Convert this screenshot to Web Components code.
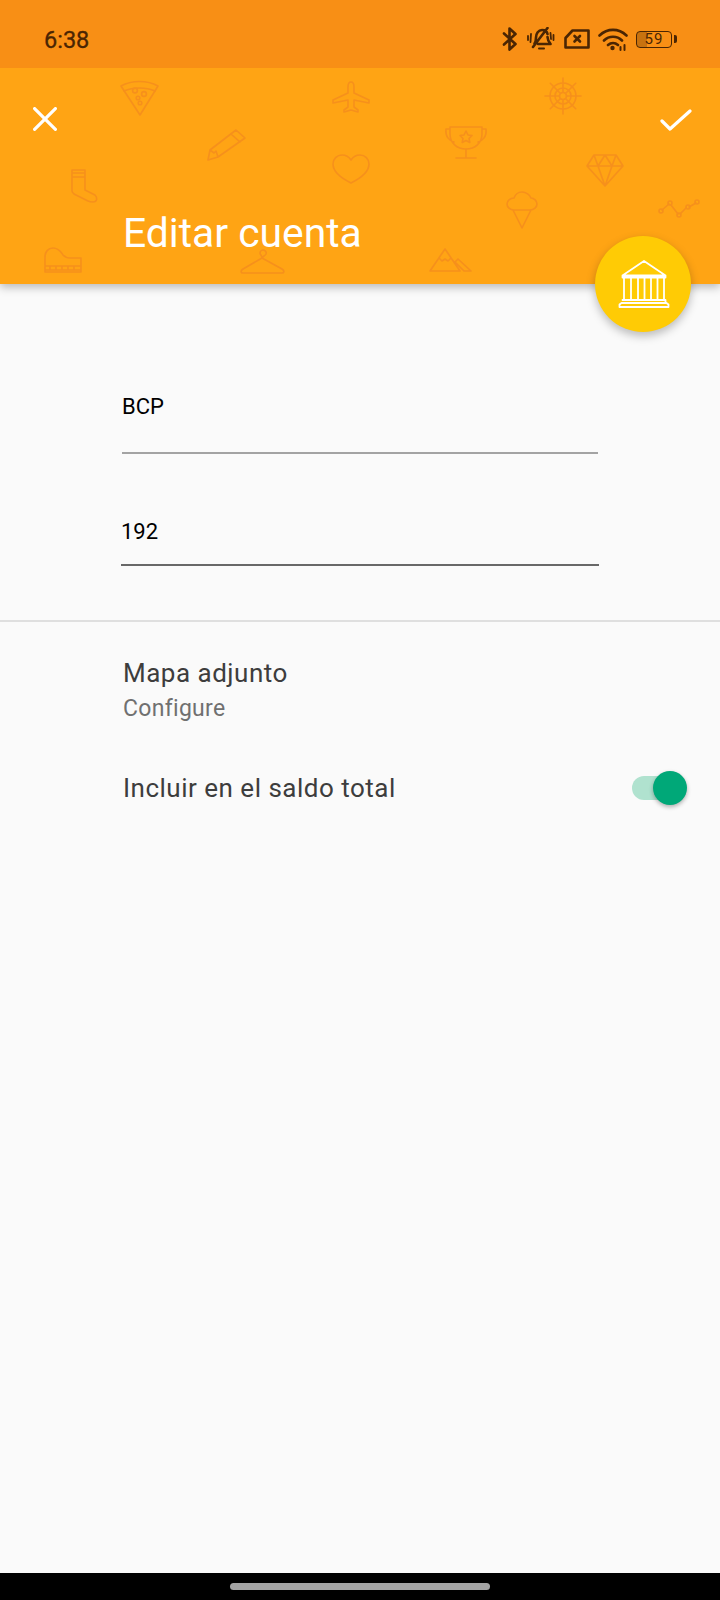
<!DOCTYPE html>
<html lang="es"><head><meta charset="utf-8"><title>Editar cuenta</title>
<style>
html,body{margin:0;padding:0;background:#fafafa}
body{width:720px;height:1600px;overflow:hidden;font-family:Roboto,"Liberation Sans",sans-serif}
app-screen{width:720px;height:1600px}
</style></head><body>
<app-screen>
  <status-bar slot="top" time="6:38"></status-bar>
  <edit-header slot="top" heading="Editar cuenta"></edit-header>
  <text-field value="BCP" style="--x:122px;--w:476px;--top:105px;--line:#a3a3a3;--lh:2px;--gap:27px"></text-field>
  <text-field value="192" style="--x:121px;--w:478px;--top:60px;--line:#686868;--lh:2px;--gap:14px"></text-field>
  <hr-line></hr-line>
  <setting-row label="Mapa adjunto" sub="Configure" style="--pt:34px"></setting-row>
  <setting-row label="Incluir en el saldo total" toggle style="--pt:45px"></setting-row>
  <nav-bar slot="bottom"></nav-bar>
</app-screen>
<script>
function el(name, html){
  customElements.define(name, class extends HTMLElement{
    connectedCallback(){
      if(this.shadowRoot) return;
      const r=this.attachShadow({mode:'open'});
      r.innerHTML = typeof html==='function' ? html(this) : html;
    }
  });
}
el('app-screen',`<style>
:host{display:flex;flex-direction:column;background:#fafafa;color:#000}
main{flex:1;display:flex;flex-direction:column;min-height:0}
</style><slot name="top"></slot><main><slot></slot></main><slot name="bottom"></slot>`);

el('status-bar',h=>`<style>
:host{display:flex;align-items:center;justify-content:space-between;position:relative;z-index:3;height:68px;background:#f88f15;color:#4a2503;padding:0 43px 0 44px;box-sizing:border-box}
.t{font:400 23.5px/1 Roboto,sans-serif;margin-top:13px;-webkit-text-stroke:.3px #4a2503}
.i{display:flex;align-items:center;height:24px;margin-top:10px}
svg{display:block;fill:none;stroke:#4a2503;stroke-width:2.6;stroke-linecap:round;stroke-linejoin:round}
.bat{box-sizing:border-box;width:36px;height:17px;border:1.700px solid #4a2503;border-radius:4px;margin-left:8px;display:flex;align-items:center;justify-content:center;font:400 15px/1 Roboto,sans-serif;letter-spacing:1px;background:linear-gradient(90deg,#c8720f 0 30%,transparent 30%)}
.nub{width:3px;height:8px;background:#4a2503;border-radius:0 2px 2px 0;margin-left:2px}
</style><span class="t">${h.getAttribute('time')}</span>
<span class="i">
<svg width="16" height="24" viewBox="0 0 16 24" style="margin-right:9px"><path d="M2 6.500 13.500 17 7.500 22.500V1.500L13.500 7 2 17.500"/></svg>
<svg width="28" height="24" viewBox="0 0 28 24" style="margin-right:9px"><path d="M7.500 16.500c1.500-2 1.500-3.500 1.500-6 0-4 2.500-7.500 6-7.500 3 0 5 1.500 5.500 4M20.500 10c.2 3 1 5 3 7H11M6 20 20.500 1"/><path d="M12 21.500h5" stroke-width="2"/><path d="M1 9v4M4 7l-.5 8M26.500 8v5M23.500 6l.5 6" stroke-width="1.800"/></svg>
<svg width="26" height="20" viewBox="0 0 26 20" style="margin-right:8px"><path d="M1.500 9 8.500 1.500H24.500V18.500H1.500Z"/><path d="M10.500 7 16 12.500M16 7 10.500 12.500"/></svg>
<svg width="30" height="23" viewBox="0 0 30 23"><path d="M1.500 7.500C9.500 0 20.500 0 28.500 7.500M6 12.500c5-5 13-5 18 0M10 17c3-2.500 7-2.500 10 0"/><circle cx="14.500" cy="20" r="2.200" fill="#4a2503" stroke="none"/><path d="M22.500 19v3M26.500 17v5" stroke-width="2"/></svg>
<span class="bat">59</span><span class="nub"></span>
</span>`);

el('edit-header',h=>`<style>
:host{display:block;position:relative;height:216px;background:#ffa414;box-shadow:0 3px 9px rgba(0,0,0,.28);z-index:2}
.bg{position:absolute;left:0;top:0;width:720px;height:216px;fill:none;stroke:#f58c1e;stroke-width:1.600;stroke-linejoin:round;stroke-linecap:round;opacity:.8}
.bar{position:relative;display:flex;justify-content:space-between;align-items:flex-start;padding:39px 28px 0 33px}
.bar svg{display:block;fill:none;stroke:#fff;stroke-width:3.200;stroke-linecap:round;stroke-linejoin:round}
h1{position:relative;margin:71px 0 0 123px;font:400 40.800px/56px Roboto,sans-serif;color:#fff}
.fab{position:absolute;left:595px;top:168px;width:96px;height:96px;border-radius:50%;background:#ffcb05;box-shadow:0 4px 10px rgba(0,0,0,.26);display:flex;align-items:center;justify-content:center}
.fab svg{fill:none;stroke:#fff;stroke-width:1.800;stroke-linejoin:round;stroke-linecap:round;display:block}
</style>
<svg class="bg" viewBox="0 68 720 216">
<g><path d="M121 86c11-6 26-6 37 0l-18 29Z"/><path d="M124 91c9-4 22-4 31 0"/><circle cx="135" cy="90.500" r="2.400"/><circle cx="144" cy="94" r="2.400"/><circle cx="138" cy="98" r="1.800"/><circle cx="140" cy="103" r="1.800"/></g>
<path d="M351 82c2 0 3 2 3 5v6l15 7v3l-15-3v7l4 3v2l-7-2-7 2v-2l4-3v-7l-15 3v-3l15-7v-6c0-3 1-5 3-5Z"/>
<path d="M236 130 245 138 218 157 208 160 210 150ZM231 134l9 8M210 150l4 3 2-2 2 6"/>
<g><circle cx="563" cy="96" r="13"/><circle cx="563" cy="96" r="8"/><circle cx="563" cy="96" r="3.500"/><path d="M563 78v14.500M563 99.500V114M545 96h14.500M566.500 96H581M550.300 83.300l10.200 10.200M565.500 98.500l10.200 10.200M575.700 83.300l-10.200 10.200M560.500 98.500l-10.200 10.200"/></g>
<path d="M450 127h32v7c0 9-7 15-16 15s-16-6-16-15ZM457 127h18M450 129h-4c-1 8 4 12 8 13M482 129h4c1 8-4 12-8 13M466 149v8M456 158h20"/><path d="m466 131 2 4 4 .5-3 3 .8 4-3.800-2-3.800 2 .8-4-3-3 4-.5Z"/>
<path d="M351 183c-6-3-18-10-18-19 0-5 4-9 9-9 4 0 7 2 9 5 2-3 5-5 9-5 5 0 9 4 9 9 0 9-12 16-18 19Z"/>
<path d="M594 155h22l7 11-18 20-18-20ZM587 166h36M594 155l4 11 7 20 7-20 4-11M598 166l7-11 7 11"/>
<path d="M514 210h16c4 0 7-3 7-6 0-3-3-6-6-6-1-3-5-6-9-6s-7 3-8 6c-4 0-7 3-7 6 0 3 3 6 7 6ZM513 210l9 18 9-18"/>
<path d="M662 210l7-6M671 205l7 9M680 214l6-6M689 207l7-4"/><circle cx="661" cy="211" r="2"/><circle cx="670" cy="203" r="2"/><circle cx="679" cy="215" r="2"/><circle cx="688" cy="207" r="2"/><circle cx="697" cy="202" r="2"/>
<path d="M430 271 445 249 460 271ZM439 258l3 3 3-2 3 2 3-3M458 259l13 12h-7l-9-9M458 259l-3 3"/>
<path d="M72 170h13v20l10 5c3 3 2 7-2 7-2 0-3 0-5-1l-14-7c-1-1-2-2-2-3ZM72 173h13M72 177h13"/>
<path d="M45 272v-15c0-5 3-9 8-9 6 0 8 4 10 7 2 2 4 3 7 3h11v14ZM45 266h36M45 270h36M50 266v3M56 266v3M62 266v3M68 266v3M74 266v3"/>
<path d="M262 258c0-3-2-3-2-5 0-2 2-3 3-3s4 1 3 4c-1 2-4 3-4 4l20 11c3 2 2 4 0 4h-39c-2 0-3-2 0-4Z"/>
</svg>
<div class="bar">
<svg width="24" height="24" viewBox="0 0 24 24"><path d="M1.600 1.600 22.400 22.400M22.400 1.600 1.600 22.400"/></svg>
<svg width="32" height="26" viewBox="0 0 32 26" style="margin-top:1px"><path d="M2 13 10 21 30 3"/></svg>
</div>
<h1>${h.getAttribute('heading')}</h1>
<div class="fab"><svg width="52" height="48" viewBox="0 0 52 48" style="margin-left:2px"><path d="M26 1 47.500 15.500V17.500H4.500V15.500ZM4.500 15.500H47.500M6 18v21.500M46 18v21.500M13 18v21M20 18v21M26.500 18v21M33 18v21M39.500 18v21M4.500 40h43v3H3.500M3.500 43H48.500M1.500 47v-2.500L3.500 43M50.500 47v-2.500L48.500 43M1.500 47h49"/></svg></div>`);

el('text-field',h=>`<style>
:host{display:block;margin:var(--top) 0 0 var(--x);width:var(--w)}
.v{font:400 22px/36px Roboto,sans-serif;color:#000;padding-bottom:var(--gap);border-bottom:var(--lh) solid var(--line)}
</style><div class="v">${h.getAttribute('value')}</div>`);

el('hr-line',`<style>:host{display:block;height:2px;background:#dfdfdf;margin-top:54px}</style>`);

el('setting-row',h=>`<style>
:host{display:flex;align-items:center;justify-content:space-between;padding:var(--pt) 33px 0 123px}
.l{font:400 26px/34px Roboto,sans-serif;color:#3d3d3d;letter-spacing:.5px}
.s{font:400 23px/34px Roboto,sans-serif;color:#707070;letter-spacing:.3px;margin-top:2px}
</style><div><div class="l">${h.getAttribute('label')}</div>${h.getAttribute('sub')?`<div class="s">${h.getAttribute('sub')}</div>`:''}</div>
${h.hasAttribute('toggle')?'<toggle-switch></toggle-switch>':''}`);

el('toggle-switch',`<style>
:host{display:flex;align-items:center;position:relative;width:55px;height:34px}
.t{width:48px;height:24px;border-radius:12px;background:#b0e2cf}
.k{position:absolute;right:0;top:0;width:34px;height:34px;border-radius:50%;background:#00a878;box-shadow:0 2px 4px rgba(0,0,0,.3)}
</style><div class="t"></div><div class="k"></div>`);

el('nav-bar',`<style>
:host{display:flex;justify-content:center;align-items:flex-start;height:27px;background:#000;padding-top:10px;box-sizing:border-box}
div{width:260px;height:7px;border-radius:4px;background:#a3a3a3}
</style><div></div>`);
</script>
</body></html>
